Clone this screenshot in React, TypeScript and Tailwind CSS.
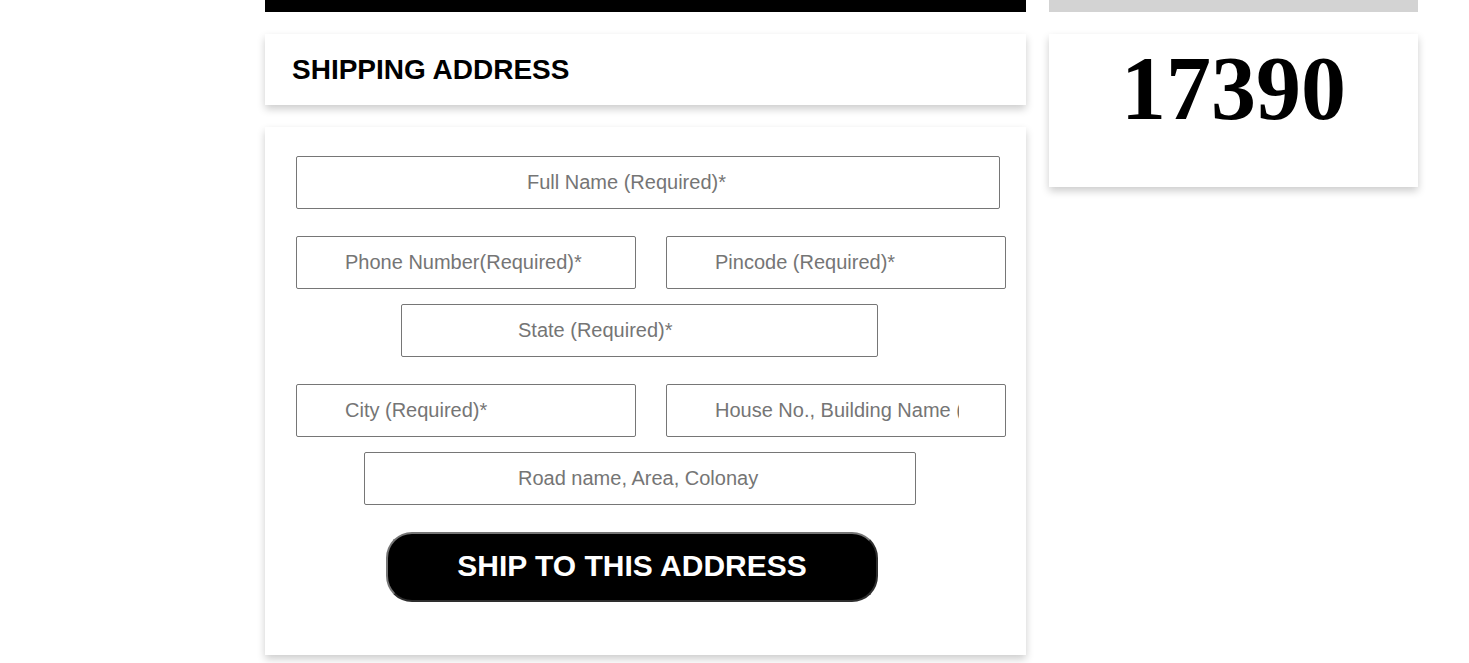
import React from "react";

const card = "bg-white shadow-[0_4px_8px_0_rgba(0,0,0,0.2)]";
const field =
  "h-[53px] border border-[#767676] rounded-[2px] bg-white text-[20px] text-black placeholder:text-[#757575] outline-none";

type FieldProps = {
  placeholder: string;
  className: string;
};

const Field = ({ placeholder, className }: FieldProps) => (
  <input type="text" placeholder={placeholder} className={`${field} ${className}`} />
);

const App = () => {
  return (
    <div className="min-h-[663px] bg-white font-['Liberation_Sans',Arial,sans-serif] flex gap-[23px] pl-[265px]">
      <section className="w-[761px] flex flex-col">
        <div className="h-3 bg-black" />
        <div className={`${card} mt-[22px] h-[71px] flex items-center pl-[27px]`}>
          <h2 className="text-[28px] font-bold leading-normal text-black">SHIPPING ADDRESS</h2>
        </div>
        <form className={`${card} mt-[22px] h-[528px] pt-[29px] pl-[31px] flex flex-col items-start`}>
          <Field placeholder="Full Name (Required)*" className="w-[704px] pl-[230px]" />
          <div className="mt-[27px] flex gap-[30px]">
            <Field placeholder="Phone Number(Required)*" className="w-[340px] pl-[48px] pr-[48px]" />
            <Field placeholder="Pincode (Required)*" className="w-[340px] pl-[48px] pr-[48px]" />
          </div>
          <Field placeholder="State (Required)*" className="mt-[15px] ml-[105px] w-[477px] pl-[116px]" />
          <div className="mt-[27px] flex gap-[30px]">
            <Field placeholder="City (Required)*" className="w-[340px] pl-[48px] pr-[48px]" />
            <Field
              placeholder="House No., Building Name (Required)*"
              className="w-[340px] pl-[48px] pr-[46px]"
            />
          </div>
          <Field placeholder="Road name, Area, Colonay" className="mt-[15px] ml-[68px] w-[552px] pl-[153px]" />
          <button
            type="button"
            className="mt-[27px] ml-[90px] w-[492px] h-[70px] pb-[3px] rounded-[26px] bg-black text-white text-[30px] font-bold border-2 border-t-[#767676] border-l-[#767676] border-b-[#2e2e2e] border-r-[#2e2e2e]"
          >
            SHIP TO THIS ADDRESS
          </button>
        </form>
      </section>

      <aside className="w-[369px] flex flex-col">
        <div className="h-3 bg-[#d3d3d3]" />
        <div className={`${card} mt-[22px] h-[153px] pt-[21px] text-center`}>
          <h1 className="font-['Liberation_Serif','Times_New_Roman',serif] text-[90px] font-bold leading-[68px] text-black">
            17390
          </h1>
        </div>
      </aside>
    </div>
  );
};

export default App;
